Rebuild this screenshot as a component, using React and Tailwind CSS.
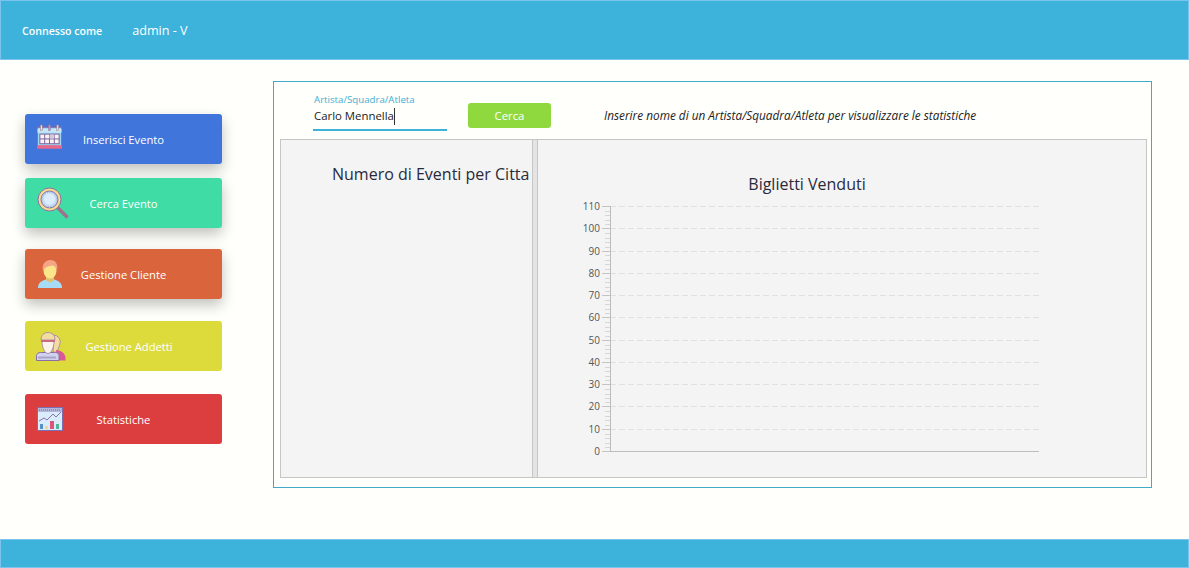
const FONT = 'font-["Open_Sans","Noto_Sans",sans-serif]';

function CalendarIcon() {
  return (
    <svg width="27" height="26" viewBox="0 0 28 27">
      <rect x="1.5" y="3.5" width="25" height="22" fill="#9fd8f2" stroke="#8d6fa8" />
      <rect x="1" y="22" width="26" height="3.5" fill="#e8668c" />
      <rect x="1.5" y="5" width="25" height="4" fill="#c5e6f5" />
      <rect x="4" y="10.5" width="20" height="10" fill="#f8f4f4" stroke="#7b5f9a" />
      <path d="M9 10.5v10M14 10.5v10M19 10.5v10M4 15.5h20" stroke="#7b5f9a" />
      <rect x="14" y="11" width="5" height="4" fill="#d8c8dc" />
      <rect x="4.5" y="1" width="2" height="6" fill="#f6dc94" stroke="#8d6fa8" strokeWidth="0.5" />
      <rect x="13" y="1" width="2" height="6" fill="#b89aa8" stroke="#8d6fa8" strokeWidth="0.5" />
      <rect x="21.5" y="1" width="2" height="6" fill="#f6dc94" stroke="#8d6fa8" strokeWidth="0.5" />
    </svg>
  );
}

function SearchIcon() {
  return (
    <svg width="32" height="32" viewBox="0 0 32 32">
      <path d="M21 21l8.5 8.5" stroke="#a0708c" strokeWidth="3.5" strokeLinecap="round" />
      <circle cx="12.5" cy="12.5" r="11.5" fill="#f6dc8c" stroke="#8d6fa8" strokeWidth="1" />
      <circle cx="12.5" cy="12.5" r="8.5" fill="#c5def5" stroke="#8d6fa8" strokeWidth="1" />
      <circle cx="12.5" cy="12" r="5.5" fill="#dcecfa" />
      <circle cx="12.5" cy="12.5" r="7.5" fill="none" stroke="#8d8fc0" strokeWidth="1" strokeDasharray="1 1.5" />
    </svg>
  );
}

function PersonIcon() {
  return (
    <svg width="24" height="28" viewBox="0 0 24 28">
      <path d="M0 28c0-5 3-7 8-8.500h8c5 1.500 8 3.500 8 8.500z" fill="#a6dcf6" />
      <path d="M8 16h8v4.500l-4 2-4-2z" fill="#e2c070" />
      <ellipse cx="12" cy="10.500" rx="6.500" ry="8" fill="#fbe58a" />
      <path d="M5 11C3.500 4 7.500 0 12.500 0 17 0 20.500 3.500 19 11c-.5-3-2-5-4.500-5.500C11.500 6.500 7 6 5 11z" fill="#f5a585" />
    </svg>
  );
}

function WorkerIcon() {
  return (
    <svg width="30" height="29" viewBox="0 0 30 29">
      <path d="M18 3a7 7 0 0 1 6 9l-3 8h-4z" fill="#f3dca0" stroke="#a07fb0" strokeWidth="0.8" />
      <path d="M20 18c4 0 8 2 9.500 7v3.500h-8z" fill="#d95a96" />
      <path d="M.5 28.500v-5c0-2 2-3 4-3h15c2 0 3.500 1 3.500 3v5z" fill="#cfd3ec" stroke="#8d6fa8" />
      <path d="M2.500 25.500h18" stroke="#8d6fa8" strokeWidth="2" strokeDasharray="1 1" />
      <path d="M6 9c0 7 3 12.500 6 12.500s6-5.500 6-12.500z" fill="#fbf3ea" stroke="#a07fb0" strokeWidth="0.8" />
      <path d="M5 8C5 3 8 .5 12 .5S19 3 19 8z" fill="#f3dca0" stroke="#a07fb0" strokeWidth="0.8" />
      <rect x="5" y="8" width="14" height="2" fill="#c86a80" />
    </svg>
  );
}

function StatsIcon() {
  return (
    <svg width="26" height="24" viewBox="0 0 26 24">
      <rect x="0.5" y="0.5" width="25" height="23" fill="#d8ecfb" stroke="#7b6fb0" />
      <rect x="1" y="1" width="24" height="4" fill="#b3b6d8" />
      <path d="M2 3h22" stroke="#6f6f9c" strokeDasharray="1 1" />
      <path d="M2 14l5-3 3 2 6-6 3 3 5-5" fill="none" stroke="#8d6fa8" />
      <rect x="3" y="17" width="3" height="5" fill="#5a8ec8" />
      <rect x="8" y="19" width="3" height="3" fill="#f0d890" />
      <rect x="13" y="14" width="4" height="8" fill="#dd5577" />
      <rect x="19" y="17" width="3" height="5" fill="#4fb89a" />
    </svg>
  );
}

const NAV_ITEMS = [
  { label: 'Inserisci Evento', icon: CalendarIcon, box: 'mt-0 bg-[#4075dc] shadow-[0_6px_14px_rgba(0,0,0,0.25)]', iconBox: 'left-[11px] top-[10px]', labelBox: 'pt-[2px]' },
  { label: 'Cerca Evento', icon: SearchIcon, box: 'mt-[14px] bg-[#3fdca5] shadow-[0_6px_14px_rgba(0,0,0,0.25)]', iconBox: 'left-[12px] top-[9px]', labelBox: 'pt-[2px]' },
  { label: 'Gestione Cliente', icon: PersonIcon, box: 'mt-[21px] bg-[#da653d] shadow-[0_6px_14px_rgba(0,0,0,0.25)]', iconBox: 'left-[13px] top-[11px]', labelBox: 'pt-[2px]' },
  { label: 'Gestione Addetti', icon: WorkerIcon, box: 'mt-[22px] bg-[#dcdb3b]', iconBox: 'left-[11px] top-[11px]', labelBox: 'pl-[11px] pt-[2px]' },
  { label: 'Statistiche', icon: StatsIcon, box: 'mt-[23px] bg-[#dc3e3f]', iconBox: 'left-[12px] top-[13px]', labelBox: 'pt-[2px]' },
];

function NavButton({ item }) {
  const Icon = item.icon;
  return (
    <div className={`relative flex h-[50px] w-[197px] items-center justify-center rounded-[3px] text-[11.200px] text-white ${item.box}`}>
      <span className={`absolute flex ${item.iconBox}`}>
        <Icon />
      </span>
      <span className={item.labelBox}>{item.label}</span>
    </div>
  );
}

const TICKS = [110, 100, 90, 80, 70, 60, 50, 40, 30, 20, 10, 0];
const STEP = 22.27;

function Chart() {
  const minor = [];
  for (let i = 0; i < 11; i++) {
    for (let j = 1; j < 5; j++) minor.push(6.5 + i * STEP + (j * STEP) / 5);
  }
  return (
    <svg width="478" height="260" viewBox="0 0 478 260" className="mt-[4px] block">
      {TICKS.map((t, i) => {
        const y = Math.round(6 + i * STEP) + 0.5;
        return (
          <g key={t}>
            {t > 0 && <line x1="42" x2="471" y1={y} y2={y} stroke="#e0e0e0" strokeDasharray="6 3" />}
            <line x1="34" x2="42" y1={y} y2={y} stroke="#c4c4c4" />
            <text x="32" y={y + 3.5} textAnchor="end" fontSize="10" fill="#555">{t}</text>
          </g>
        );
      })}
      {minor.map((y) => (
        <line key={y} x1="37" x2="42" y1={Math.round(y) + 0.5} y2={Math.round(y) + 0.5} stroke="#d6d6d6" />
      ))}
      <line x1="42.5" x2="42.5" y1="6" y2="251" stroke="#bdbdbd" />
      <line x1="42" x2="471" y1="251.500" y2="251.500" stroke="#bdbdbd" />
    </svg>
  );
}

export default function App() {
  return (
    <div className={`flex h-[568px] w-[1189px] flex-col overflow-hidden bg-[#fffffc] ${FONT}`}>
      <header className="flex h-[60px] shrink-0 items-center border border-[#7cc3ee] bg-[#3db2db] pt-[3px] text-white">
        <span className="ml-[21px] text-[10.600px] font-semibold">Connesso come</span>
        <span className="ml-[30px] text-[12.600px]">admin - V</span>
      </header>

      <div className="flex flex-1">
        <aside className="w-[273px] shrink-0 pl-[25px] pt-[54px]">
          {NAV_ITEMS.map((item) => (
            <NavButton key={item.label} item={item} />
          ))}
        </aside>

        <main className="mt-[21px] h-[407px] w-[879px] border border-[#42a9ca]">
          <div className="flex h-[57px] items-start">
            <div className="ml-[39px] w-[134px] pt-[11px]">
              <div className="ml-[1px] text-[9.700px] leading-[13px] text-[#45add2]">Artista/Squadra/Atleta</div>
              <div className="h-[25px] border-b-2 border-[#3db2db] pl-[1px] pt-[1px] text-[11.400px] leading-[17px] text-[#222]">
                Carlo Mennella<span className="inline-block h-[17px] w-px translate-y-[1px] bg-[#333] align-top" />
              </div>
            </div>
            <div className="ml-[21px] mt-[21px] flex h-[25px] w-[83px] items-center justify-center rounded-[3px] bg-[#8fd93f] pt-[2px] text-[11.300px] text-white">
              Cerca
            </div>
            <div className="ml-[53px] mt-[24px] text-[11.800px] italic leading-[18px] text-[#222]">
              Inserire nome di un Artista/Squadra/Atleta per visualizzare le statistiche
            </div>
          </div>

          <div className="ml-[6px] flex h-[339px] w-[867px] border border-[#c6c6c6] bg-[#f4f4f4]">
            <section className="w-[252px] shrink-0 border-r border-[#c6c6c6] pl-[51px] pt-[22px] text-[16px] leading-[24px] whitespace-nowrap text-[#2a2a3a]">
              Numero di Eventi per Citta
            </section>
            <div className="w-[4px] shrink-0 bg-[#e4e4e4]" />
            <section className="flex-1 border-l border-[#c6c6c6] pl-[30px]">
              <div className="w-[478px]">
                <div className="pt-[32px] text-center text-[16px] leading-[24px] text-[#2a2a3a]">Biglietti Venduti</div>
                <Chart />
              </div>
            </section>
          </div>
        </main>
      </div>

      <footer className="h-[29px] shrink-0 border border-[#7cc3ee] bg-[#3db2db]" />
    </div>
  );
}
